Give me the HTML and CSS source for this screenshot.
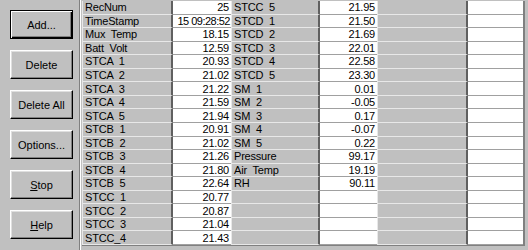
FILE: index.html
```html
<!DOCTYPE html>
<html lang="en">
<head>
    <meta charset="UTF-8">
    <title>Data Monitor</title>
    <link rel="stylesheet" href="styles.css">
</head>
<body>

<div class="window">
    <div class="side">
        <button class="btn default">Add...</button>
        <button class="btn">Delete</button>
        <button class="btn">Delete All</button>
        <button class="btn">Options...</button>
        <button class="btn"><u>S</u>top</button>
        <button class="btn"><u>H</u>elp</button>
    </div>

    <div class="grid">
        <div class="lbl">RecNum</div><div class="val">25</div><div class="lbl">STCC 5</div><div class="val">21.95</div><div class="lbl"></div><div class="val"></div>
        <div class="lbl">TimeStamp</div><div class="val ts">15 09:28:52</div><div class="lbl">STCD 1</div><div class="val">21.50</div><div class="lbl"></div><div class="val"></div>
        <div class="lbl">Mux Temp</div><div class="val">18.15</div><div class="lbl">STCD 2</div><div class="val">21.69</div><div class="lbl"></div><div class="val"></div>
        <div class="lbl">Batt Volt</div><div class="val">12.59</div><div class="lbl">STCD 3</div><div class="val">22.01</div><div class="lbl"></div><div class="val"></div>
        <div class="lbl">STCA 1</div><div class="val">20.93</div><div class="lbl">STCD 4</div><div class="val">22.58</div><div class="lbl"></div><div class="val"></div>
        <div class="lbl">STCA 2</div><div class="val">21.02</div><div class="lbl">STCD 5</div><div class="val">23.30</div><div class="lbl"></div><div class="val"></div>
        <div class="lbl">STCA 3</div><div class="val">21.22</div><div class="lbl">SM 1</div><div class="val">0.01</div><div class="lbl"></div><div class="val"></div>
        <div class="lbl">STCA 4</div><div class="val">21.59</div><div class="lbl">SM 2</div><div class="val">-0.05</div><div class="lbl"></div><div class="val"></div>
        <div class="lbl">STCA 5</div><div class="val">21.94</div><div class="lbl">SM 3</div><div class="val">0.17</div><div class="lbl"></div><div class="val"></div>
        <div class="lbl">STCB 1</div><div class="val">20.91</div><div class="lbl">SM 4</div><div class="val">-0.07</div><div class="lbl"></div><div class="val"></div>
        <div class="lbl">STCB 2</div><div class="val">21.02</div><div class="lbl">SM 5</div><div class="val">0.22</div><div class="lbl"></div><div class="val"></div>
        <div class="lbl">STCB 3</div><div class="val">21.26</div><div class="lbl">Pressure</div><div class="val">99.17</div><div class="lbl"></div><div class="val"></div>
        <div class="lbl">STCB 4</div><div class="val">21.80</div><div class="lbl">Air Temp</div><div class="val">19.19</div><div class="lbl"></div><div class="val"></div>
        <div class="lbl">STCB 5</div><div class="val">22.64</div><div class="lbl">RH</div><div class="val">90.11</div><div class="lbl"></div><div class="val"></div>
        <div class="lbl">STCC 1</div><div class="val">20.77</div><div class="lbl"></div><div class="val"></div><div class="lbl"></div><div class="val"></div>
        <div class="lbl">STCC 2</div><div class="val">20.87</div><div class="lbl"></div><div class="val"></div><div class="lbl"></div><div class="val"></div>
        <div class="lbl">STCC 3</div><div class="val">21.04</div><div class="lbl"></div><div class="val"></div><div class="lbl"></div><div class="val"></div>
        <div class="lbl">STCC_4</div><div class="val">21.43</div><div class="lbl"></div><div class="val"></div><div class="lbl"></div><div class="val"></div>
    </div>
</div>

</body>
</html>
```

FILE: styles.css
```css
body {
    margin: 0;
    padding: 0;
    background-color: #c0c0c0;
    font-family: 'Liberation Sans', Arial, sans-serif;
    font-size: 11px;
    color: #000;
}
.window {
    display: flex;
    width: 528px;
    height: 250px;
    overflow: hidden;
    background-color: #c0c0c0;
}
.side {
    width: 80px;
    display: flex;
    flex-direction: column;
    gap: 11px;
    padding: 10px 0 0 10px;
    box-sizing: border-box;
    border-right: 1px solid #808080;
    box-shadow: 1px 0 0 #ffffff;
    margin-right: 2px;
}
.btn {
    width: 63px;
    height: 29px;
    padding: 0;
    font-family: inherit;
    font-size: 11px;
    color: #000;
    background-color: #c0c0c0;
    border: 1px solid;
    border-color: #ffffff #000000 #000000 #ffffff;
    box-shadow: inset -1px -1px 0 #808080, inset 1px 1px 0 #dfdfdf;
}
.btn.default {
    border-color: #000;
    box-shadow: inset 1px 1px 0 #ffffff, inset -1px -1px 0 #000000, inset -2px -2px 0 #808080;
}
.grid {
    display: grid;
    grid-template-columns: 91px 58px 89px 57px 91px 55px;
    grid-template-rows: repeat(18, 1fr);
    height: 244px;
    margin-top: 1px;
    border-right: 2px solid #808080;
    border-bottom: 1px solid #808080;
    align-self: flex-start;
}
.lbl, .val {
    display: flex;
    align-items: center;
    overflow: hidden;
    white-space: nowrap;
    box-sizing: border-box;
    letter-spacing: -0.2px;
    word-spacing: 3px;
}
.lbl {
    background-color: #c0c0c0;
    padding-left: 2px;
    border-left: 1px solid #e8e8e8;
    border-right: 2px solid #606060;
    border-bottom: 1px solid #e8e8e8;
}
.val {
    background-color: #ffffff;
    justify-content: flex-end;
    padding-right: 2px;
    border-bottom: 1px solid #a0a0a0;
}
.val.ts {
    letter-spacing: -0.5px;
    word-spacing: 0;
    padding-right: 1px;
}
```
